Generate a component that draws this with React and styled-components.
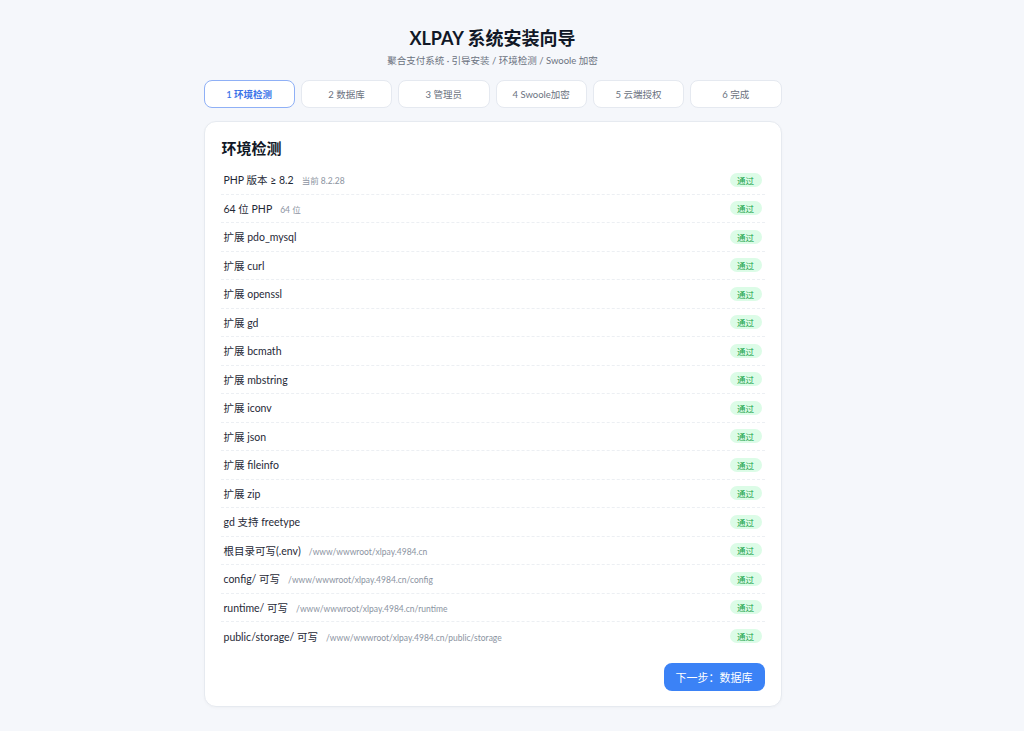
import React from "react";
import styled, { createGlobalStyle } from "styled-components";

const steps = ["1 环境检测", "2 数据库", "3 管理员", "4 Swoole加密", "5 云端授权", "6 完成"];

const checks = [
    { name: "PHP 版本 ≥ 8.2", note: "当前 8.2.28" },
    { name: "64 位 PHP", note: "64 位" },
    { name: "扩展 pdo_mysql" },
    { name: "扩展 curl" },
    { name: "扩展 openssl" },
    { name: "扩展 gd" },
    { name: "扩展 bcmath" },
    { name: "扩展 mbstring" },
    { name: "扩展 iconv" },
    { name: "扩展 json" },
    { name: "扩展 fileinfo" },
    { name: "扩展 zip" },
    { name: "gd 支持 freetype" },
    { name: "根目录可写(.env)", note: "/www/wwwroot/xlpay.4984.cn", path: true },
    { name: "config/ 可写", note: "/www/wwwroot/xlpay.4984.cn/config", path: true },
    { name: "runtime/ 可写", note: "/www/wwwroot/xlpay.4984.cn/runtime", path: true },
    { name: "public/storage/ 可写", note: "/www/wwwroot/xlpay.4984.cn/public/storage", path: true },
];

export default function App() {
    return (
        <>
            <GlobalStyle />
            <Page>
                <Wrap>
                    <Title>XLPAY 系统安装向导</Title>
                    <Subtitle>聚合支付系统 · 引导安装 / 环境检测 / Swoole 加密</Subtitle>
                    <Steps>
                        {steps.map((s, i) => (
                            <Step key={s} $active={i === 0}>{s}</Step>
                        ))}
                    </Steps>
                    <Card>
                        <CardTitle>环境检测</CardTitle>
                        <List>
                            {checks.map((c) => (
                                <Row key={c.name}>
                                    <Label>
                                        {c.name}
                                        {c.note && <Note>{c.note}</Note>}
                                    </Label>
                                    <Badge>通过</Badge>
                                </Row>
                            ))}
                        </List>
                        <Footer>
                            <NextButton>下一步：数据库</NextButton>
                        </Footer>
                    </Card>
                </Wrap>
            </Page>
        </>
    );
}

const GlobalStyle = createGlobalStyle`
    html, body {
        margin: 0;
        padding: 0;
        background: #f5f7fb;
        font-family: Lato, "Noto Sans CJK SC", sans-serif;
        color: #1f2937;
    }
`;

const Page = styled.div`
    min-height: 731px;
    box-sizing: border-box;
    padding: 26px 39px 24px 0;
`;

const Wrap = styled.div`
    width: 578px;
    margin: 0 auto;
`;

const Title = styled.h1`
    margin: 0;
    text-align: center;
    font-size: 18px;
    line-height: 24px;
    font-weight: 700;
    color: #111827;
`;

const Subtitle = styled.div`
    margin-top: 4px;
    text-align: center;
    font-size: 9.5px;
    line-height: 14px;
    color: #6b7280;
`;

const Steps = styled.div`
    display: grid;
    grid-template-columns: repeat(6, 1fr);
    gap: 6px;
    margin-top: 12px;
`;

const Step = styled.div`
    height: 28px;
    box-sizing: border-box;
    display: flex;
    align-items: center;
    justify-content: center;
    border-radius: 8px;
    background: #ffffff;
    border: 1px solid ${(p) => (p.$active ? "#8fb0f6" : "#e5e9f0")};
    color: ${(p) => (p.$active ? "#3b73e8" : "#6b7280")};
    font-weight: ${(p) => (p.$active ? 600 : 400)};
    font-size: 9.5px;
`;

const Card = styled.div`
    margin-top: 13px;
    background: #ffffff;
    border: 1px solid #e6eaf0;
    border-radius: 12px;
    padding: 16px 16px 15px 16px;
    box-shadow: 0 1px 3px rgba(15, 23, 42, 0.03);
`;

const CardTitle = styled.h2`
    margin: 0 0 0 1px;
    font-size: 15px;
    line-height: 20px;
    font-weight: 700;
    color: #111827;
`;

const List = styled.div`
    margin-top: 8px;
    display: flex;
    flex-direction: column;
`;

const Row = styled.div`
    height: 28.5px;
    box-sizing: border-box;
    display: flex;
    align-items: center;
    justify-content: space-between;
    padding: 0 3px 0 3px;
    border-bottom: 1px dashed #eceff3;

    &:last-child {
        border-bottom: none;
    }
`;

const Label = styled.div`
    font-size: 10.5px;
    color: #1f2937;
    display: flex;
    align-items: baseline;
`;

const Note = styled.span`
    margin-left: 8px;
    font-size: 8.5px;
    color: #8b93a1;
`;

const Badge = styled.span`
    display: inline-flex;
    align-items: center;
    justify-content: center;
    width: 32px;
    height: 14px;
    border-radius: 7px;
    background: #dcfce7;
    color: #16a34a;
    font-size: 8.5px;
`;

const Footer = styled.div`
    display: flex;
    justify-content: flex-end;
    margin-top: 12px;
`;

const NextButton = styled.button`
    width: 101px;
    height: 28px;
    border: none;
    border-radius: 8px;
    background: #3b82f6;
    color: #ffffff;
    font-family: inherit;
    font-size: 11px;
    cursor: pointer;
`;
